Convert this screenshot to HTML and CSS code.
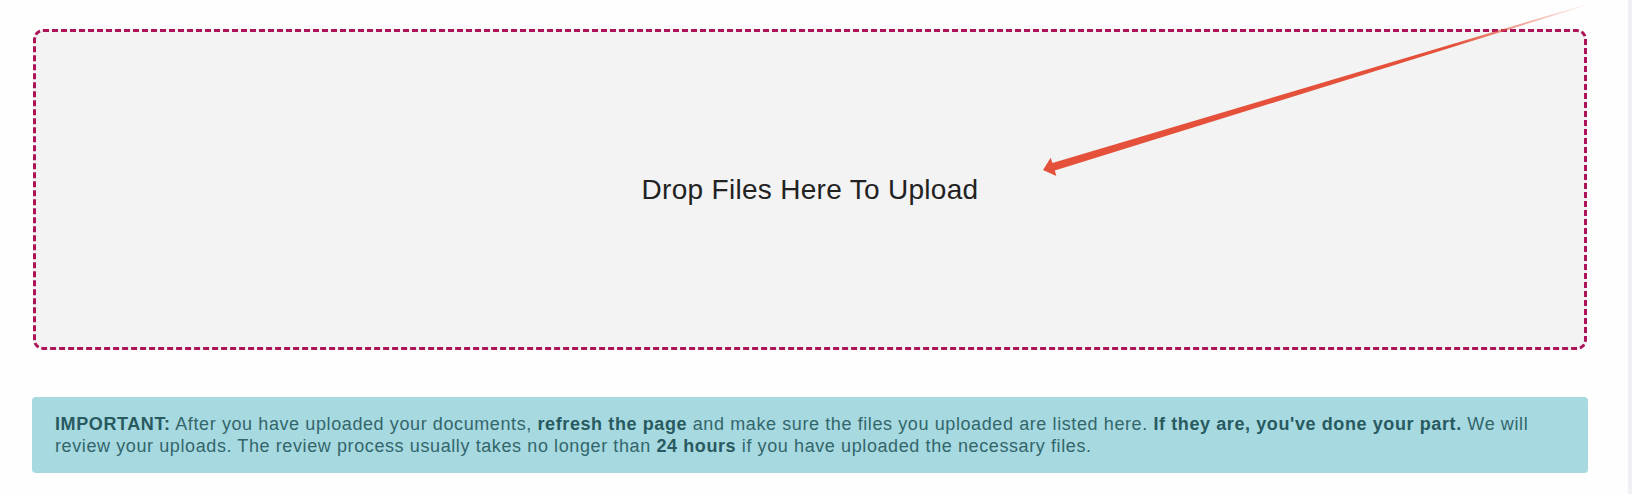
FILE: index.html
```html
<!DOCTYPE html>
<html lang="en">
<head>
  <meta charset="UTF-8" />
  <meta name="viewport" content="width=device-width, initial-scale=1.0"/>
  <title>Upload Documents</title>
  <link rel="stylesheet" href="styles.css">
</head>
<body>
  <div class="page">
    <div class="content">
      <div class="dropzone">
        <span>Drop Files Here To Upload</span>
      </div>
      <div class="alert">
        <strong>IMPORTANT:</strong> After you have uploaded your documents, <strong>refresh the page</strong> and make sure the files you uploaded are listed here. <strong>If they are, you've done your part.</strong> We will review your uploads. The review process usually takes no longer than <strong>24 hours</strong> if you have uploaded the necessary files.
      </div>
    </div>
    <div class="scroll-track"></div>
  </div>

  <svg class="pointer" width="1632" height="494" viewBox="0 0 1632 494">
    <defs>
      <linearGradient id="fade" gradientUnits="userSpaceOnUse" x1="1043" y1="170" x2="1590" y2="4">
        <stop offset="0" stop-color="#e4503a"/>
        <stop offset="0.75" stop-color="#e4503a"/>
        <stop offset="1" stop-color="#e4503a" stop-opacity="0"/>
      </linearGradient>
    </defs>
    <polygon fill="url(#fade)" points="1043,170 1056.3,175.9 1054.8,170.6 1586.2,5.5 1585.8,4.4 1052.4,163.1 1050.7,157.7"/>
  </svg>
</body>
</html>
```

FILE: styles.css
```css
* {
  box-sizing: border-box;
}
body {
  margin: 0;
  font-family: "Liberation Sans", Arial, sans-serif;
  background-color: #fefefe;
  color: #222;
}
.page {
  display: flex;
  min-height: 494px;
}
.content {
  flex: 1;
  padding: 29px 40px 0 32px;
}
.dropzone {
  height: 321px;
  margin: 0 1px;
  background-color: #f3f3f3;
  border: 3px dashed #ad1457;
  border-radius: 10px;
  display: flex;
  align-items: center;
  justify-content: center;
  font-size: 28px;
  letter-spacing: 0.3px;
  color: #222;
}
.alert {
  margin-top: 47px;
  padding: 16px 20px 16px 23px;
  background-color: #a7d9e0;
  border-radius: 4px;
  color: #33666b;
  font-size: 18px;
  letter-spacing: 0.6px;
  line-height: 22px;
}
.alert strong {
  color: #285a60;
}
.scroll-track {
  width: 4px;
  background-color: #f0f0f4;
}
.pointer {
  position: absolute;
  top: 0;
  left: 0;
  pointer-events: none;
}
```
